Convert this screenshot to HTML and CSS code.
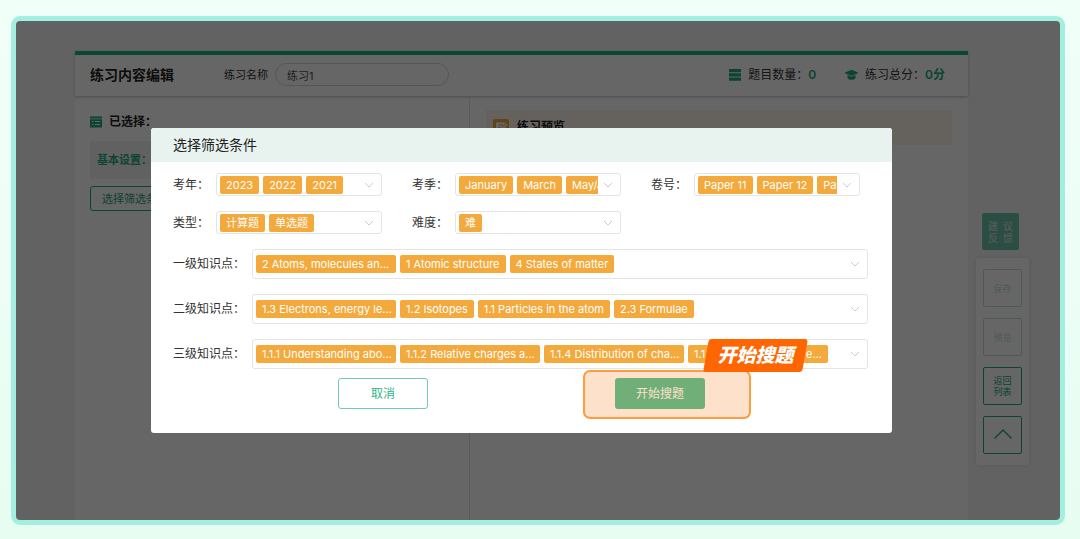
FILE: index.html
```html
<!DOCTYPE html>
<html lang="zh-CN">
<head>
<meta charset="utf-8">
<meta name="viewport" content="width=device-width, initial-scale=1">
<title>练习内容编辑</title>
<link rel="stylesheet" href="styles.css">
</head>
<body>
<div class="frame">
  <div class="page">
    <header class="topbar">
      <h1 class="topbar-title">练习内容编辑</h1>
      <label class="name-label" for="name">练习名称</label>
      <input class="name-input" id="name" type="text" value="练习1">
      <div class="stat">
        <svg width="12" height="12" viewBox="0 0 12 12"><path fill="currentColor" d="M0 0h12v3.300H0zM0 4.200h12v3.300H0zM0 8.400h12v3.300H0z"/></svg>
        <span>题目数量：</span><strong>0</strong>
      </div>
      <div class="stat">
        <svg width="13" height="12" viewBox="0 0 13 12"><path fill="currentColor" d="M6.500.8 13 3.500v.8L6.500 7 2 5.100 0 4.200v-.7zM2.500 6l4 1.700 4-1.700v3.200c-2 2-6 2-8 0z"/></svg>
        <span>练习总分：</span><strong>0分</strong>
      </div>
    </header>
    <main class="columns">
      <section class="chosen">
        <h2 class="chosen-title">
          <svg width="12" height="12" viewBox="0 0 12 12"><path fill="currentColor" d="M0 .5h12v2H0zM0 3.300h12v8.200H0z"/><path fill="#fff" d="M2 5h1.500v1H2zM5 5h5v1H5zM2 8h1.500v1H2zM5 8h5v1H5z"/></svg>
          <span>已选择：</span>
        </h2>
        <div class="basic">基本设置：</div>
        <button class="filter-button" type="button">选择筛选条件</button>
      </section>
      <section class="preview">
        <h2 class="preview-title">
          <svg width="16" height="16" viewBox="0 0 16 16"><rect width="16" height="16" rx="2" fill="currentColor"/><path fill="#fff" d="M3 3.500h10l-4.500 5L8 11l2.500-.5 2.500-2.500v5H3z"/><path stroke="currentColor" d="M5 6h5M5 8.500h2.500"/><path stroke="#fff" stroke-width="1.600" d="m9.500 9.500 4.500-4.500"/></svg>
          <span>练习预览</span>
        </h2>
      </section>
    </main>
  </div>

  <aside class="side">
    <button class="feedback" type="button">建&ensp;议<br>反&ensp;馈</button>
    <div class="side-panel">
      <button class="side-button" type="button" disabled>保存</button>
      <button class="side-button" type="button" disabled>预览</button>
      <button class="side-button" type="button">返回<br>列表</button>
      <button class="side-button" type="button" aria-label="返回顶部">
        <svg width="18" height="10" viewBox="0 0 18 10"><path fill="none" stroke="currentColor" stroke-width="1.400" d="M.5 9.500 9 1l8.500 8.500"/></svg>
      </button>
    </div>
  </aside>

  <div class="overlay">
    <form class="dialog" role="dialog" aria-labelledby="dialog-title">
      <h2 class="dialog-title" id="dialog-title">选择筛选条件</h2>
      <div class="fields">
        <div class="grid">
          <div class="field">
            <label for="year">考年：</label>
            <button class="select" id="year" type="button" aria-haspopup="listbox">
              <span class="tags"><span class="tag">2023</span><span class="tag">2022</span><span class="tag">2021</span></span>
              <svg class="arrow" width="10" height="6" viewBox="0 0 10 6"><path d="m1 1 4 4 4-4"/></svg>
            </button>
          </div>
          <div class="field">
            <label for="season">考季：</label>
            <button class="select" id="season" type="button" aria-haspopup="listbox">
              <span class="tags"><span class="tag">January</span><span class="tag">March</span><span class="tag">May/June</span></span>
              <svg class="arrow" width="10" height="6" viewBox="0 0 10 6"><path d="m1 1 4 4 4-4"/></svg>
            </button>
          </div>
          <div class="field">
            <label for="paper">卷号：</label>
            <button class="select" id="paper" type="button" aria-haspopup="listbox">
              <span class="tags"><span class="tag">Paper 11</span><span class="tag">Paper 12</span><span class="tag">Paper 13</span></span>
              <svg class="arrow" width="10" height="6" viewBox="0 0 10 6"><path d="m1 1 4 4 4-4"/></svg>
            </button>
          </div>
          <div class="field">
            <label for="type">类型：</label>
            <button class="select" id="type" type="button" aria-haspopup="listbox">
              <span class="tags"><span class="tag">计算题</span><span class="tag">单选题</span></span>
              <svg class="arrow" width="10" height="6" viewBox="0 0 10 6"><path d="m1 1 4 4 4-4"/></svg>
            </button>
          </div>
          <div class="field">
            <label for="level">难度：</label>
            <button class="select" id="level" type="button" aria-haspopup="listbox">
              <span class="tags"><span class="tag">难</span></span>
              <svg class="arrow" width="10" height="6" viewBox="0 0 10 6"><path d="m1 1 4 4 4-4"/></svg>
            </button>
          </div>
        </div>
        <div class="field field-wide">
          <label for="topic1">一级知识点：</label>
          <button class="select" id="topic1" type="button" aria-haspopup="listbox">
            <span class="tags"><span class="tag tag-long">2 Atoms, molecules an...</span><span class="tag">1 Atomic structure</span><span class="tag">4 States of matter</span></span>
            <svg class="arrow" width="10" height="6" viewBox="0 0 10 6"><path d="m1 1 4 4 4-4"/></svg>
          </button>
        </div>
        <div class="field field-wide">
          <label for="topic2">二级知识点：</label>
          <button class="select" id="topic2" type="button" aria-haspopup="listbox">
            <span class="tags"><span class="tag tag-long">1.3 Electrons, energy le...</span><span class="tag">1.2 Isotopes</span><span class="tag">1.1 Particles in the atom</span><span class="tag">2.3 Formulae</span></span>
            <svg class="arrow" width="10" height="6" viewBox="0 0 10 6"><path d="m1 1 4 4 4-4"/></svg>
          </button>
        </div>
        <div class="field field-wide">
          <label for="topic3">三级知识点：</label>
          <button class="select" id="topic3" type="button" aria-haspopup="listbox">
            <span class="tags"><span class="tag tag-long">1.1.1 Understanding abo...</span><span class="tag tag-long">1.1.2 Relative charges a...</span><span class="tag tag-long">1.1.4 Distribution of cha...</span><span class="tag tag-long tag-end"><span>1.1</span><span>e...</span></span></span>
            <svg class="arrow" width="10" height="6" viewBox="0 0 10 6"><path d="m1 1 4 4 4-4"/></svg>
          </button>
        </div>
      </div>
      <div class="actions">
        <button class="cancel" type="button">取消</button>
        <div class="submit-wrap">
          <button class="submit" type="submit">开始搜题</button>
          <div class="spotlight"></div>
          <div class="callout"><span>开始搜题</span></div>
        </div>
      </div>
    </form>
  </div>
</div>
</body>
</html>
```
FILE: styles.css
```css
* { box-sizing: border-box; }

body {
  margin: 0;
  min-height: 100vh;
  padding: 16px 15px 14px 11px;
  display: flex;
  background: linear-gradient(#f0fff8, #e8fdf2);
  color: #333;
  font: 12px/18px Inter, "Noto Sans CJK SC", sans-serif;
}
button, input { font: inherit; color: inherit; margin: 0; }
button { padding: 0; cursor: pointer; }
h1, h2 { margin: 0; font-weight: 600; }
svg { flex: none; }

.frame {
  position: relative;
  flex: 1;
  display: flex;
  border: 5px solid #a3efdf;
  border-radius: 9px;
  background: #f6f6f6;
  overflow: hidden;
}

.page {
  flex: 1;
  display: flex;
  flex-direction: column;
  margin: 30px 92px 0 59px;
  background: #fff;
}
.topbar {
  display: flex;
  align-items: center;
  height: 45px;
  padding: 0 23px 2px 15px;
  border-top: 4px solid #1fae83;
  box-shadow: 0 1px 3px #bbb;
}
.topbar-title { font-size: 14px; color: #222; }
.name-label { margin-left: 50px; font-size: 11px; }
.name-input {
  width: 174px;
  height: 23px;
  margin: 0 auto 0 7px;
  padding: 0 11px;
  border: 1px solid #d5d5d5;
  border-radius: 12px;
  background: transparent;
  color: #555;
  font-size: 11px;
}
.stat { display: flex; align-items: center; margin-left: 29px; }
.stat svg { margin-right: 7px; color: #21a87d; }
.stat strong { font-weight: 600; color: #21a87d; }

.columns {
  flex: 1;
  display: grid;
  grid-template-columns: minmax(0, 395fr) minmax(0, 498fr);
}
.chosen {
  padding: 17px 15px;
  border-right: 1px solid #e0e0e0;
}
.preview { padding: 14px 16px; }
.chosen-title, .preview-title { display: flex; align-items: center; color: #222; }
.chosen-title { gap: 7px; font-size: 12px; }
.chosen-title svg { color: #21a87d; }
.preview-title {
  height: 35px;
  gap: 8px;
  padding: 0 7px 2px;
  background: #fdf6ec;
  font-size: 12px;
}
.preview-title svg { color: #f3a93c; }
.basic {
  height: 38px;
  margin-top: 10px;
  padding: 0 7px;
  line-height: 38px;
  background: #f3f3f3;
  color: #21a87d;
  font-size: 11px;
  font-weight: 600;
}
.filter-button {
  height: 25px;
  margin-top: 7px;
  padding: 0 11px;
  border: 1px solid #21a87d;
  border-radius: 3px;
  background: transparent;
  color: #21a87d;
  font-size: 11px;
}

.side {
  position: absolute;
  top: 192px;
  right: 31px;
  display: flex;
  flex-direction: column;
  gap: 8px;
}
.feedback {
  width: 37px;
  height: 37px;
  margin-left: 6px;
  border: 0;
  border-radius: 2px;
  background: #6ac4a9;
  color: #e4e4e4;
  font-size: 10px;
  line-height: 12px;
}
.side-panel {
  display: flex;
  flex-direction: column;
  gap: 11px;
  padding: 11px 7px;
  border-radius: 3px;
  background: #fff;
  box-shadow: 0 0 6px #d2e2dc;
}
.side-button {
  width: 39px;
  height: 38px;
  border: 1px solid #21a87d;
  border-radius: 2px;
  background: transparent;
  color: #21a87d;
  font-size: 9px;
  line-height: 11px;
}
.side-button:disabled { border-color: #c3dfd5; color: #c3dfd5; }

.overlay {
  position: absolute;
  inset: 0;
  display: flex;
  justify-content: center;
  align-items: flex-start;
  padding: 107px 33px 0 0;
  background: rgba(0, 0, 0, .6);
}
.dialog {
  flex: 0 1 741px;
  padding-bottom: 24px;
  border-radius: 3px;
  background: #fff;
}
.dialog-title {
  height: 34px;
  padding-left: 22px;
  border-radius: 3px 3px 0 0;
  background: #e8f2ef;
  color: #222;
  font-size: 14px;
  font-weight: 400;
  line-height: 34px;
}
.fields {
  display: flex;
  flex-direction: column;
  gap: 15px;
  padding: 11px 24px 9px 22px;
}
.grid {
  display: grid;
  grid-template-columns: repeat(3, minmax(0, 1fr));
  gap: 15px 30px;
  padding-right: 8px;
}
.field { display: flex; align-items: center; }
.field label { flex: none; width: 43px; font-size: 12px; }
.field-wide label { width: 79px; }
.select {
  flex: 1;
  min-width: 0;
  height: 23px;
  display: flex;
  align-items: center;
  padding: 0 7px 0 3px;
  border: 1px solid #e4e4e4;
  border-radius: 3px;
  background: #fff;
}
.field-wide .select { height: 30px; }
.tags {
  flex: 1;
  min-width: 0;
  display: flex;
  gap: 4px;
  overflow: hidden;
}
.tag {
  flex: none;
  padding: 0 6px;
  border-radius: 2px;
  background: #f3a93c;
  color: #fff;
  font-size: 11px;
  line-height: 18px;
  white-space: nowrap;
}
.tag-long { width: 140px; text-align: left; }
.tag-end { display: flex; justify-content: space-between; }
.arrow {
  margin-left: 5px;
  fill: none;
  stroke: #ccc;
}

.actions {
  display: flex;
  justify-content: center;
  gap: 187px;
}
.cancel, .submit {
  width: 90px;
  height: 31px;
  border-radius: 3px;
  font-size: 12px;
}
.cancel { border: 1px solid #6fceac; background: #fff; color: #2fb586; }
.submit { border: 0; background: #2fb586; color: #fff; }
.submit-wrap { position: relative; }
.spotlight {
  position: absolute;
  inset: -8px -46px -10px -32px;
  border: 2px solid #ff9c3c;
  border-radius: 7px;
  background: rgba(249, 164, 94, .33);
  pointer-events: none;
}
.callout {
  position: absolute;
  top: -39px;
  left: 91px;
  width: 99px;
  height: 33px;
  color: #fff;
  font-size: 19px;
  font-style: italic;
  font-weight: 900;
  line-height: 33px;
  text-align: center;
  white-space: nowrap;
}
.callout::before {
  content: "";
  position: absolute;
  inset: 0;
  border-radius: 3px;
  background: #ff6500;
  transform: skewX(-10deg);
}
.callout span { position: relative; }
```
